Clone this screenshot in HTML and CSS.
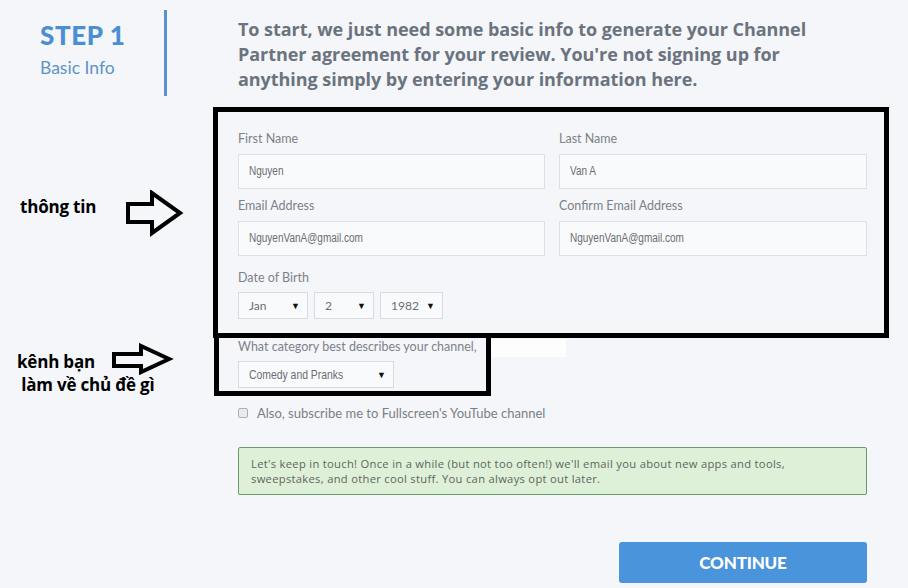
FILE: index.html
```html
<!DOCTYPE html>
<html>
<head>
<meta charset="utf-8">
<title>Step 1 - Basic Info</title>
<link rel="stylesheet" href="styles.css">
</head>
<body>
<div id="page">
<div class="header">
	<div class="step">
		<h1>STEP 1</h1>
		<p>Basic Info</p>
	</div>
	<div class="intro">
		<p>To start, we just need some basic info to generate your Channel Partner agreement for your review. You're not signing up for anything simply by entering your information here.</p>
	</div>
</div>

<div class="form">
	<div class="grid">
		<div class="field">
			<label>First Name</label>
			<div class="input"><span>Nguyen</span></div>
		</div>
		<div class="field">
			<label>Last Name</label>
			<div class="input"><span>Van A</span></div>
		</div>
		<div class="field">
			<label>Email Address</label>
			<div class="input"><span>NguyenVanA@gmail.com</span></div>
		</div>
		<div class="field">
			<label>Confirm Email Address</label>
			<div class="input"><span>NguyenVanA@gmail.com</span></div>
		</div>
	</div>
	<div class="dob">
		<label>Date of Birth</label>
		<div class="selects">
			<div class="select month"><span>Jan</span><b>&#9660;</b></div>
			<div class="select day"><span>2</span><b>&#9660;</b></div>
			<div class="select year"><span>1982</span><b>&#9660;</b></div>
		</div>
	</div>
	<div class="category">
		<label>What category best describes your channel,</label>
		<div class="select cat"><span class="narrow">Comedy and Pranks</span><b>&#9660;</b></div>
	</div>
	<div class="check">
		<span class="box"></span>
		<span>Also, subscribe me to Fullscreen's YouTube channel</span>
	</div>
	<div class="notice">
		Let's keep in touch! Once in a while (but not too often!) we'll email you about new apps and tools, sweepstakes, and other cool stuff. You can always opt out later.
	</div>
	<div class="actions">
		<button class="continue">CONTINUE</button>
	</div>
</div>

<!-- annotations drawn over the screenshot -->
<div class="mark mark-info"></div>
<div class="mark mark-cat"></div>
<div class="patch"></div>
<div class="note note-info">thông tin</div>
<div class="note note-cat">kênh bạn<br>&nbsp;làm về chủ đề gì</div>
<svg class="arrow arrow-info" width="60" height="48" viewBox="0 0 60 48">
	<path d="M3 14 H27 V3 L55 23 L27 43 V32 H3 Z" fill="none" stroke="#000" stroke-width="4" stroke-linejoin="miter"/>
</svg>
<svg class="arrow arrow-cat" width="64" height="36" viewBox="0 0 64 36">
	<path d="M3 11 H30 V3 L58 16 L30 29 V23 H3 Z" fill="none" stroke="#000" stroke-width="4" stroke-linejoin="miter"/>
</svg>
</div>
</body>
</html>
```

FILE: styles.css
```css
html,body{margin:0;padding:0}
body{background:#f4f6f9;font-family:Lato,"Open Sans",sans-serif;color:#6d7580}
#page{position:relative;width:908px;height:588px;overflow:hidden}

.header{display:flex;align-items:flex-start}
.step{width:124px;padding:19px 0 0 40px}
.step h1{margin:0;font-size:26px;line-height:32px;font-weight:900;color:#4a8fd2;letter-spacing:0.6px}
.step p{margin:6px 0 0;font-size:17.5px;color:#5f93c7}
.intro{margin-top:10px;height:86px;border-left:3px solid #5a93cc;padding-left:71px;width:600px}
.intro p{margin:7px 0 0;max-width:592px;font-family:"Open Sans",sans-serif;font-size:18px;line-height:25px;font-weight:700;color:#6b737e;letter-spacing:-0.05px}

.form{margin:35px 0 0 238px;width:629px}
.grid{display:grid;grid-template-columns:307px 308px;column-gap:14px;row-gap:9px}
label{display:block;font-size:12.5px;line-height:16px;color:#7d828a;margin-bottom:7px}
.input{height:33px;border:1px solid #dde0e4;background:#f9fafb;padding:0 10px;font-family:"Liberation Sans",sans-serif;font-size:12.5px;line-height:33px;color:#6a6e74}
.input span,.narrow{display:inline-block;transform:scaleX(0.8);transform-origin:left center;white-space:nowrap}

.dob{margin-top:14px}
.dob label{margin-bottom:6px}
.selects{display:flex;gap:6px}
.select{display:flex;justify-content:space-between;align-items:center;height:25px;border:1px solid #d8dbdf;background:#f9fafb;padding:0 7px 0 10px;font-size:12px;color:#6a6e74}
.select b{font-size:9px;color:#111;font-weight:normal}
.month{width:51px}
.day{width:41px}
.year{width:44px}
.category{margin-top:20px}
.category label{margin-bottom:6px}
.cat{width:137px;font-family:"Liberation Sans",sans-serif;font-size:13px}

.check{display:flex;align-items:center;gap:9px;margin-top:17px;font-size:13px;color:#7a7f87}
.check .box{width:8px;height:8px;border:1px solid #aab0b8;border-radius:2px;background:#e9ecef}

.notice{margin-top:26px;background:#dff0d8;border:1px solid #6a9a68;border-radius:2px;padding:9px 80px 8px 12px;font-family:"Open Sans",sans-serif;font-size:11.2px;line-height:14.5px;letter-spacing:0.3px;color:#5d6660}

.actions{display:flex;justify-content:flex-end;margin-top:47px}
.continue{width:248px;height:41px;border:0;border-radius:3px;background:#4a94db;color:#fff;font-family:Lato,sans-serif;font-size:17px;font-weight:900;letter-spacing:-0.2px}

.mark{position:absolute;border:5px solid #000}
.mark-info{left:213px;top:107px;width:666px;height:221px}
.mark-cat{left:214px;top:333px;width:267px;height:58px;border-top:0}
.patch{position:absolute;left:491px;top:339px;width:75px;height:18px;background:#fdfdfe}
.note{position:absolute;font-family:"Open Sans",sans-serif;font-weight:700;font-size:17px;color:#000;letter-spacing:-0.2px}
.note-info{left:20px;top:195px}
.note-cat{left:17px;top:350px;line-height:23px}
.arrow{position:absolute}
.arrow-info{left:125px;top:190px}
.arrow-cat{left:111px;top:343px}
```
